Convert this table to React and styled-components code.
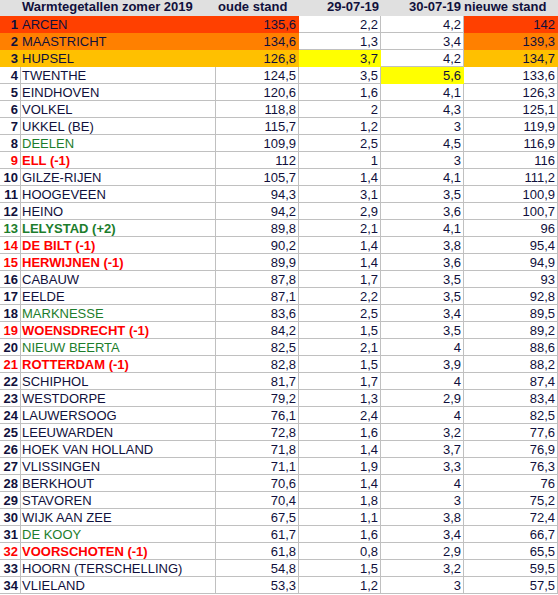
import React from "react";
import styled, { createGlobalStyle } from "styled-components";

const GlobalStyle = createGlobalStyle`
  body {
    margin: 0;
    background: #ffffff;
  }
`;

const ROWS = [
  ["ARCEN", "135,6", "2,2", "4,2", "142"],
  ["MAASTRICHT", "134,6", "1,3", "3,4", "139,3"],
  ["HUPSEL", "126,8", "3,7", "4,2", "134,7"],
  ["TWENTHE", "124,5", "3,5", "5,6", "133,6"],
  ["EINDHOVEN", "120,6", "1,6", "4,1", "126,3"],
  ["VOLKEL", "118,8", "2", "4,3", "125,1"],
  ["UKKEL (BE)", "115,7", "1,2", "3", "119,9"],
  ["DEELEN", "109,9", "2,5", "4,5", "116,9", "green"],
  ["ELL (-1)", "112", "1", "3", "116", "red"],
  ["GILZE-RIJEN", "105,7", "1,4", "4,1", "111,2"],
  ["HOOGEVEEN", "94,3", "3,1", "3,5", "100,9"],
  ["HEINO", "94,2", "2,9", "3,6", "100,7"],
  ["LELYSTAD (+2)", "89,8", "2,1", "4,1", "96", "greenBold"],
  ["DE BILT (-1)", "90,2", "1,4", "3,8", "95,4", "red"],
  ["HERWIJNEN (-1)", "89,9", "1,4", "3,6", "94,9", "red"],
  ["CABAUW", "87,8", "1,7", "3,5", "93"],
  ["EELDE", "87,1", "2,2", "3,5", "92,8"],
  ["MARKNESSE", "83,6", "2,5", "3,4", "89,5", "green"],
  ["WOENSDRECHT (-1)", "84,2", "1,5", "3,5", "89,2", "red"],
  ["NIEUW BEERTA", "82,5", "2,1", "4", "88,6", "green"],
  ["ROTTERDAM (-1)", "82,8", "1,5", "3,9", "88,2", "red"],
  ["SCHIPHOL", "81,7", "1,7", "4", "87,4"],
  ["WESTDORPE", "79,2", "1,3", "2,9", "83,4"],
  ["LAUWERSOOG", "76,1", "2,4", "4", "82,5"],
  ["LEEUWARDEN", "72,8", "1,6", "3,2", "77,6"],
  ["HOEK VAN HOLLAND", "71,8", "1,4", "3,7", "76,9"],
  ["VLISSINGEN", "71,1", "1,9", "3,3", "76,3"],
  ["BERKHOUT", "70,6", "1,4", "4", "76"],
  ["STAVOREN", "70,4", "1,8", "3", "75,2"],
  ["WIJK AAN ZEE", "67,5", "1,1", "3,8", "72,4"],
  ["DE KOOY", "61,7", "1,6", "3,4", "66,7", "green"],
  ["VOORSCHOTEN (-1)", "61,8", "0,8", "2,9", "65,5", "red"],
  ["HOORN (TERSCHELLING)", "54,8", "1,5", "3,2", "59,5"],
  ["VLIELAND", "53,3", "1,2", "3", "57,5"],
];

const PODIUM = ["#ff4000", "#ff8000", "#ffc000"];
const YELLOW = { "2-3": true, "3-4": true };

const TEXT = "#10103c";
const COLORS = {
  green: "#1c7d2c",
  greenBold: "#1c7d2c",
  red: "#ff0000",
};

const Sheet = styled.div`
  display: grid;
  grid-template-columns: 21px 195px 83px 82px 83px 94px;
  width: 558px;
  font-family: "Liberation Sans", Arial, sans-serif;
  font-size: 13px;
  color: ${TEXT};
`;

const HeadCell = styled.div`
  height: 16px;
  line-height: 13px;
  background: #e0e0e0;
  font-weight: bold;
  white-space: nowrap;
  overflow: visible;
  text-align: ${(p) => (p.$right ? "right" : "left")};
  padding: ${(p) => (p.$right ? "0 3px 0 0" : "0 0 0 1px")};
`;

const Cell = styled.div`
  box-sizing: border-box;
  height: 17px;
  line-height: 16px;
  padding: 1px ${(p) => (p.$right ? "2px" : "0")} 0 ${(p) => (p.$right ? "0" : "1px")};
  text-align: ${(p) => (p.$right ? "right" : "left")};
  white-space: nowrap;
  border-right: 1px solid ${(p) => (p.$fill ? "transparent" : "#c0c0c0")};
  border-bottom: 1px solid ${(p) => (p.$fill ? "transparent" : "#c0c0c0")};
  background: ${(p) => p.$fill || "#ffffff"};
  color: ${(p) => p.$color || TEXT};
  font-weight: ${(p) => (p.$bold ? "bold" : "normal")};
`;

const Rank = styled(Cell)`
  font-weight: bold;
  padding-right: 2px;
`;

export default function App() {
  return (
    <>
      <GlobalStyle />
      <Sheet>
        <HeadCell />
        <HeadCell>Warmtegetallen zomer 2019</HeadCell>
        <HeadCell style={{ paddingLeft: 2 }}>oude stand</HeadCell>
        <HeadCell $right style={{ paddingRight: 2 }}>29-07-19</HeadCell>
        <HeadCell $right>30-07-19</HeadCell>
        <HeadCell style={{ paddingLeft: 0 }}>nieuwe stand</HeadCell>

        {ROWS.map(([name, oud, d1, d2, nieuw, kind], i) => {
          const fill = PODIUM[i];
          const strong = kind === "red" || kind === "greenBold";
          const color = COLORS[kind];
          return (
            <React.Fragment key={name}>
              <Rank $right $fill={fill} $color={strong ? color : undefined}>
                {i + 1}
              </Rank>
              <Cell $fill={fill} $color={color} $bold={strong}>
                {name}
              </Cell>
              <Cell $right $fill={fill}>{oud}</Cell>
              <Cell $right $fill={YELLOW[`${i}-3`] ? "#ffff00" : undefined}>{d1}</Cell>
              <Cell $right $fill={YELLOW[`${i}-4`] ? "#ffff00" : undefined}>{d2}</Cell>
              <Cell $right $fill={fill}>{nieuw}</Cell>
            </React.Fragment>
          );
        })}
      </Sheet>
    </>
  );
}
